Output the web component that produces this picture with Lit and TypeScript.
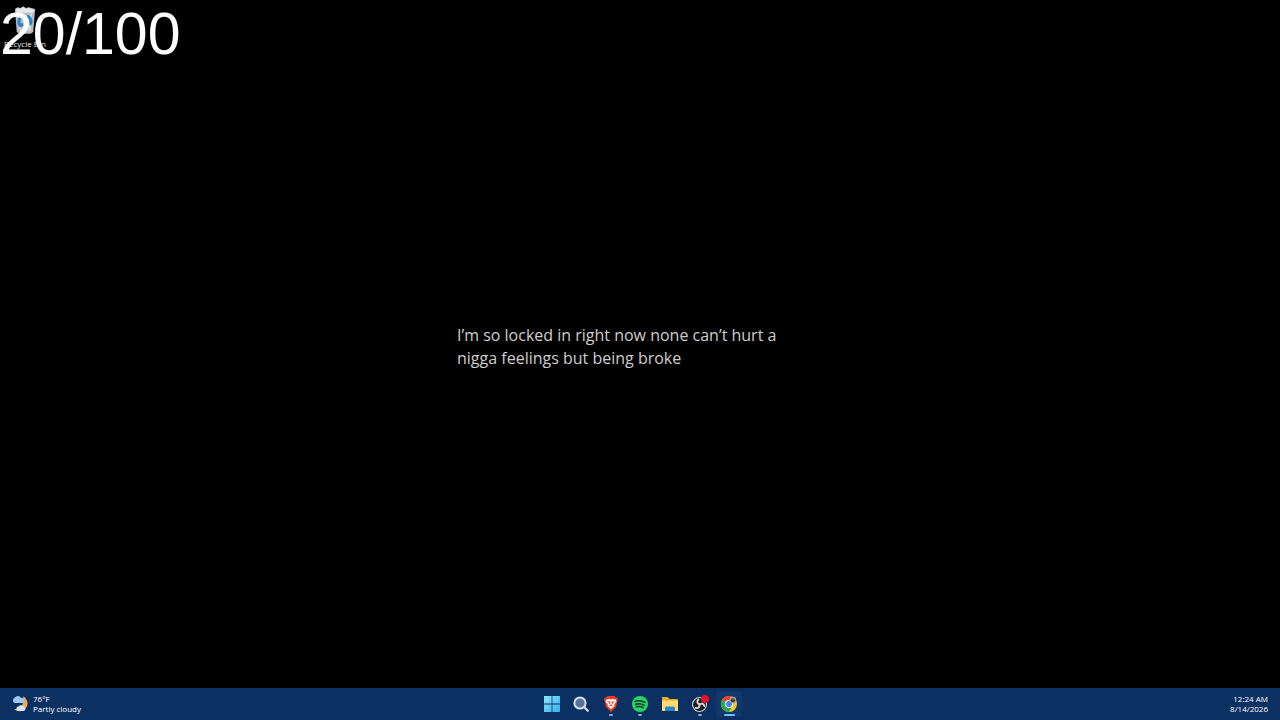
import { LitElement, html, css, svg } from "lit";
import { customElement } from "lit/decorators.js";

const bin = svg`<svg class="bin" viewBox="0 0 24 30">
  <path d="M1 3 4 1l3 1 3-2 3 2 3-1 3 1 4 1-2 25-3 2H6l-3-2Z" fill="#b9bdc2"/>
  <path d="M2 3l3-1 2 1 3-2 3 2 3-1 6 2-1 3H3Z" fill="#e4e8eb"/>
  <path d="M5 8l2 19M19 8l-2 19" stroke="#dfe4e9" stroke-width="1.5"/>
  <path d="M10 12c-5 0-6 6-3 9l3-1M14 11c4 1 6 6 3 9" fill="none" stroke="#2387d0" stroke-width="3.500"/>
</svg>`;

const weather = svg`<svg class="weather-icon" viewBox="0 0 18 18">
  <path d="M11 1a8 8 0 1 1-9 13c7 1 11-6 9-13Z" fill="#f3a64a"/>
  <path d="M2.500 8a3 3 0 0 1 .4-5.400A3.500 3.500 0 0 1 9 3 2.600 2.600 0 0 1 11 8Z" fill="#9cc8f2"/>
  <path d="M6 16a2.300 2.300 0 0 1 .5-4.500 3.300 3.300 0 0 1 5-.2A2.500 2.500 0 0 1 12 16Z" fill="#dbe6f3"/>
</svg>`;

const start = svg`<svg viewBox="0 0 18 18">
  <defs><linearGradient id="tile" x2="1" y2="1" gradientUnits="objectBoundingBox"><stop stop-color="#8be3fb"/><stop offset="1" stop-color="#35b1ee"/></linearGradient></defs>
  <path d="M1 1h7.600v7.600H1ZM9.400 1H17v7.600H9.400ZM1 9.400h7.600V17H1ZM9.400 9.400H17V17H9.400Z" fill="url(#tile)"/>
</svg>`;

const search = svg`<svg viewBox="0 0 18 18">
  <circle cx="8" cy="8" r="5.600" fill="#56739c" stroke="#d4dfec" stroke-width="2"/>
  <path d="m12.200 12.200 3.600 3.600" stroke="#d4dfec" stroke-width="2.200" stroke-linecap="round"/>
</svg>`;

const brave = svg`<svg viewBox="0 0 18 18">
  <path d="M5.500 1h7l1.400 1.500 1.700.2.400 2-.5 1-1.500 6.300L9 17l-5-5-1.500-6.300-.5-1 .4-2 1.700-.2Z" fill="#e83c26"/>
  <path d="M4.500 4.500 7 4l2 .6 2-.6 2.500.5 1 2-2.300 3 .2 1.500L9 14 5.600 11l.2-1.500-2.300-3Z" fill="#fff"/>
  <path d="m5.500 6.500 2.500.7-.6 2M12.500 6.500l-2.500.7.6 2M7.300 11 9 10l1.700 1" fill="none" stroke="#ee4329" stroke-width="1.100"/>
</svg>`;

const spotify = svg`<svg viewBox="0 0 18 18">
  <circle cx="9" cy="9" r="8" fill="#28d565"/>
  <path d="M4 6.400c3.500-1 7-.7 10.200 1M4.600 9.200c3-.8 6-.4 8.700 1.100M5.200 11.800c2.600-.6 4.900-.3 7 .9" fill="none" stroke="#103527" stroke-width="1.400" stroke-linecap="round"/>
</svg>`;

const folder = svg`<svg viewBox="0 0 18 18">
  <path d="M1 2h5.500L8.500 4H16a1 1 0 0 1 1 1v11H1Z" fill="#e9a92b"/>
  <path d="M1 5.500h16V16H1Z" fill="#ffdc72"/>
  <path d="M4 16v-3a1.500 1.500 0 0 1 1.500-1.500h7A1.500 1.500 0 0 1 14 13v3Z" fill="#2787c8"/>
</svg>`;

const obs = svg`<svg viewBox="0 0 18 18">
  <circle cx="8.500" cy="9.500" r="7" fill="#1c1d22" stroke="#c5c9d0" stroke-width="1.200"/>
  <g fill="none" stroke="#d4d6da" stroke-width="1.900" stroke-linecap="round">
    <path d="M7.400 4.500c-2 2-1 4.300 1 4.700"/>
    <path d="M7.400 4.500c-2 2-1 4.300 1 4.700" transform="rotate(120 8.500 9.500)"/>
    <path d="M7.400 4.500c-2 2-1 4.300 1 4.700" transform="rotate(240 8.500 9.500)"/>
  </g>
  <circle cx="14" cy="4" r="4" fill="#e0122b"/>
</svg>`;

const chrome = svg`<svg viewBox="0 0 18 18">
  <circle cx="9" cy="9" r="8" fill="#f8c92d"/>
  <path d="M9 9 2.070 5A8 8 0 0 1 15.930 5Z" fill="#e34133"/>
  <path d="M2.070 5A8 8 0 0 0 9 17l3.460-6L9 9Z" fill="#2da54f"/>
  <circle cx="9" cy="9" r="4" fill="#fff"/><circle cx="9" cy="9" r="3" fill="#3f83ed"/>
  <circle cx="12.800" cy="5.200" r="3.400" fill="#a9a49b"/>
  <path d="M10.500 5.500c.8-3 3.800-3 4.600 0l-1 1.800h-2.600Z" fill="#4b3b35"/>
</svg>`;

const apps = [
  { name: "Start", icon: start, state: "" },
  { name: "Search", icon: search, state: "" },
  { name: "Brave", icon: brave, state: "running" },
  { name: "Spotify", icon: spotify, state: "running" },
  { name: "File Explorer", icon: folder, state: "" },
  { name: "OBS Studio", icon: obs, state: "running" },
  { name: "Google Chrome", icon: chrome, state: "active" },
];

@customElement("task-bar")
class TaskBar extends LitElement {
  static styles = css`
    :host { display: grid; grid-template-columns: 1fr auto 1fr; height: 32px; background: #0d3063; color: #fff; font: 8px/10px "Open Sans", "Noto Sans", sans-serif; }
    button { border: 0; padding: 0; margin: 0; background: none; color: inherit; font: inherit; }
    .weather { justify-self: start; display: flex; align-items: center; gap: 3px; padding-left: 12px; text-align: left; }
    .weather-icon { width: 18px; height: 18px; }
    .line { display: block; }
    .apps { display: grid; grid-template-columns: repeat(7, 1fr); width: 207px; padding-left: 1px; }
    .app { position: relative; display: flex; align-items: center; justify-content: center; border-radius: 3px; }
    .app svg { width: 18px; height: 18px; }
    .app.active { background: #123769; margin: 3px 2px; }
    .app::after { position: absolute; height: 2px; border-radius: 1px; }
    .app.running::after { content: ""; bottom: 4px; width: 4px; background: #93a4bb; }
    .app.active::after { content: ""; bottom: 1px; width: 11px; background: #62c5f4; }
    .clock { justify-self: end; padding-right: 12px; text-align: right; }
  `;
  render() {
    return html`
      <button class="weather">${weather}<span><span class="line">76°F</span><span class="line">Partly cloudy</span></span></button>
      <nav class="apps">${apps.map((a) => html`<button class="app ${a.state}" aria-label=${a.name}>${a.icon}</button>`)}</nav>
      <button class="clock"><span class="line">12:24 AM</span><span class="line">8/14/2026</span></button>
    `;
  }
}

@customElement("app-root")
class AppRoot extends LitElement {
  static styles = css`
    :host { display: flex; flex-direction: column; height: 100vh; background: #000; overflow: hidden; }
    .desktop { position: relative; flex: 1; display: flex; align-items: center; justify-content: center; }
    .quote { margin: 0; width: 340px; padding: 6px 26px 0 0; color: #cecece; font: 16px/23px "Open Sans", "Noto Sans", sans-serif; }
    .shortcut { position: absolute; left: 0; top: 5px; width: 50px; border: 0; padding: 0; background: none; color: #e6e6e6; font: 8px/10px "Open Sans", sans-serif; display: flex; flex-direction: column; align-items: center; gap: 4px; }
    .bin { width: 22px; height: 30px; }
    .counter { position: absolute; left: 0; top: 0; color: #fff; font: 59px/68px "Liberation Sans", Arial, sans-serif; }
  `;
  render() {
    return html`
      <main class="desktop">
        <button class="shortcut">${bin}<span>Recycle Bin</span></button>
        <p class="quote">I’m so locked in right now none can’t hurt a nigga feelings but being broke</p>
        <div class="counter">20/100</div>
      </main>
      <task-bar></task-bar>
    `;
  }
}
